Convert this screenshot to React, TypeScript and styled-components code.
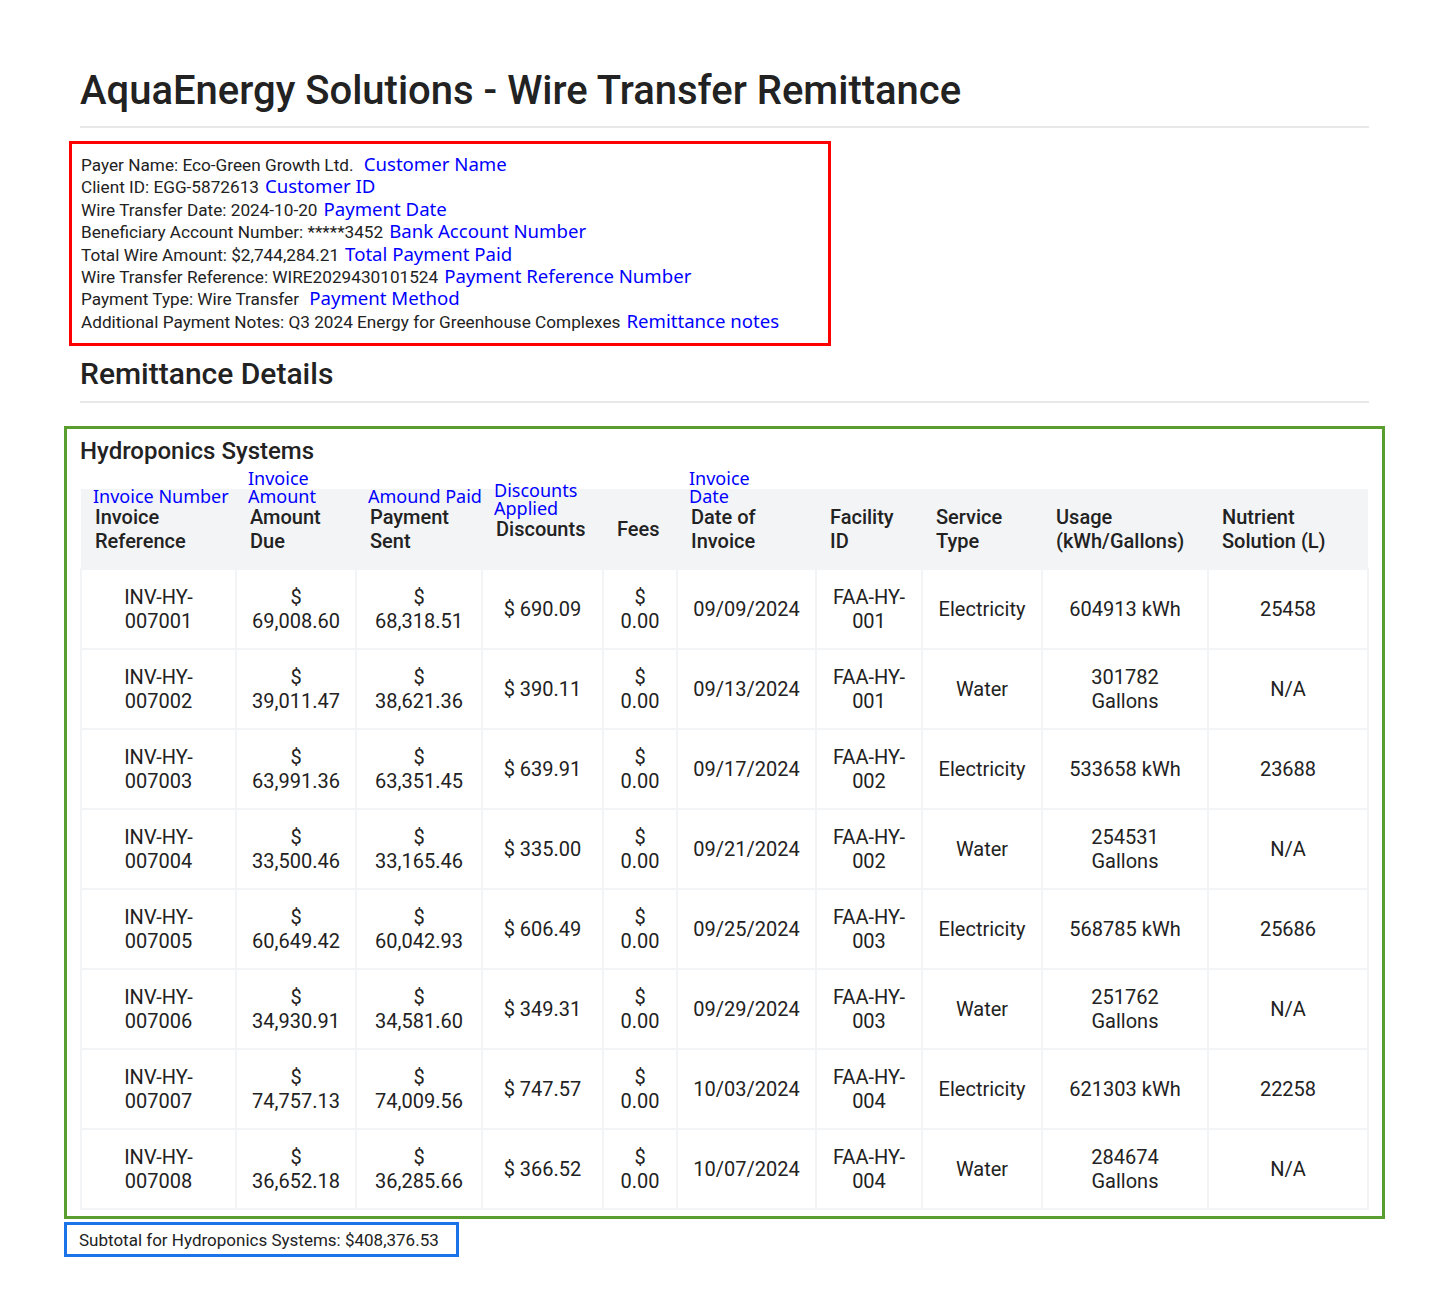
import React from "react";
import styled, { createGlobalStyle } from "styled-components";

const Global = createGlobalStyle`
  body { margin: 0; background: #fff; font-family: Roboto, "Liberation Sans", sans-serif; color: #222; }
`;

const Page = styled.div`
  padding: 67px 80px 40px 80px;
`;

const Title = styled.h1`
  margin: 0;
  font-size: 40px;
  font-weight: 500;
  color: #222;
  padding-bottom: 12px;
  border-bottom: 2px solid #e8e8e8;
`;

const PayerBox = styled.div`
  margin: 13px 0 0 -11px;
  width: 762px;
  box-sizing: border-box;
  border: 3px solid #f00;
  padding: 10px 9px 10px 9px;
  font-size: 17.2px;
  line-height: 22.4px;
`;

const Label = styled.span`
  color: #00f;
  font-family: "Noto Sans", "Open Sans", sans-serif;
  font-size: 18.6px;
  line-height: 1;
  margin-left: 6px;
`;

const SubTitle = styled.h2`
  margin: 10px 0 0;
  font-size: 30px;
  font-weight: 500;
  padding-bottom: 10px;
  border-bottom: 2px solid #e8e8e8;
`;

const Section = styled.div`
  margin: 23px -16px 0 -16px;
  border: 3px solid #5a9e2f;
  padding: 8px 15px 6px 13px;
`;

const SectionTitle = styled.h3`
  margin: 0 0 24px;
  font-size: 24px;
  font-weight: 500;
`;

const Table = styled.table`
  border-collapse: collapse;
  width: 100%;
  font-size: 20px;
  table-layout: fixed;
`;

const Th = styled.th`
  background: #f3f4f6;
  text-align: left;
  font-weight: 500;
  padding: 14px 14px;
  height: 80px;
  box-sizing: border-box;
  line-height: 24px;
  vertical-align: middle;
`;

const ThInner = styled.div`
  position: relative;
`;

const Tag = styled.span`
  position: absolute;
  left: -2px;
  bottom: 100%;
  color: #00f;
  font-weight: 400;
  font-family: "Noto Sans", "Open Sans", sans-serif;
  font-size: 18px;
  line-height: 18px;
  white-space: nowrap;
`;

const Td = styled.td`
  background: #fff;
  border: 2px solid #f3f4f6;
  text-align: center;
  padding: 10px 14px;
  height: 80px;
  box-sizing: border-box;
  line-height: 24px;
`;

const Subtotal = styled.div`
  display: inline-block;
  margin: 3px 0 0 -16px;
  border: 3px solid #1a73e8;
  padding: 5px 17px 4px 12px;
  font-size: 17px;
`;

const cols: [number, string, string][] = [
  [155, "Invoice Number", "Invoice Reference"],
  [120, "Invoice\nAmount", "Amount Due"],
  [126, "Amound Paid", "Payment Sent"],
  [121, "Discounts\nApplied", "Discounts"],
  [74, "", "Fees"],
  [139, "Invoice\nDate", "Date of Invoice"],
  [106, "", "Facility ID"],
  [120, "", "Service Type"],
  [166, "", "Usage (kWh/Gallons)"],
  [160, "", "Nutrient Solution (L)"],
];

const rows = [
  ["INV-HY-007001", "69,008.60", "68,318.51", "690.09", "09/09/2024", "FAA-HY-001", "Electricity", "604913 kWh", "25458"],
  ["INV-HY-007002", "39,011.47", "38,621.36", "390.11", "09/13/2024", "FAA-HY-001", "Water", "301782 Gallons", "N/A"],
  ["INV-HY-007003", "63,991.36", "63,351.45", "639.91", "09/17/2024", "FAA-HY-002", "Electricity", "533658 kWh", "23688"],
  ["INV-HY-007004", "33,500.46", "33,165.46", "335.00", "09/21/2024", "FAA-HY-002", "Water", "254531 Gallons", "N/A"],
  ["INV-HY-007005", "60,649.42", "60,042.93", "606.49", "09/25/2024", "FAA-HY-003", "Electricity", "568785 kWh", "25686"],
  ["INV-HY-007006", "34,930.91", "34,581.60", "349.31", "09/29/2024", "FAA-HY-003", "Water", "251762 Gallons", "N/A"],
  ["INV-HY-007007", "74,757.13", "74,009.56", "747.57", "10/03/2024", "FAA-HY-004", "Electricity", "621303 kWh", "22258"],
  ["INV-HY-007008", "36,652.18", "36,285.66", "366.52", "10/07/2024", "FAA-HY-004", "Water", "284674 Gallons", "N/A"],
];

const payer: [string, string][] = [
  ["Payer Name: Eco-Green Growth Ltd. ", "Customer Name"],
  ["Client ID: EGG-5872613", "Customer ID"],
  ["Wire Transfer Date: 2024-10-20", "Payment Date"],
  ["Beneficiary Account Number: *****3452", "Bank Account Number"],
  ["Total Wire Amount: $2,744,284.21", "Total Payment Paid"],
  ["Wire Transfer Reference: WIRE2029430101524", "Payment Reference Number"],
  ["Payment Type: Wire Transfer ", "Payment Method"],
  ["Additional Payment Notes: Q3 2024 Energy for Greenhouse Complexes", "Remittance notes"],
];

export default function App() {
  return (
    <Page>
      <Global />
      <Title>AquaEnergy Solutions - Wire Transfer Remittance</Title>
      <PayerBox>
        {payer.map(([t, l]) => (
          <div key={l}>
            {t}
            <Label>{l}</Label>
          </div>
        ))}
      </PayerBox>
      <SubTitle>Remittance Details</SubTitle>
      <Section>
        <SectionTitle>Hydroponics Systems</SectionTitle>
        <Table>
          <colgroup>
            {cols.map(([w], i) => (
              <col key={i} style={{ width: w }} />
            ))}
          </colgroup>
          <thead>
            <tr>
              {cols.map(([, tag, h], i) => (
                <Th key={i}>
                  <ThInner>
                    {tag && (
                      <Tag>
                        {tag.split("\n").map((s) => (
                          <div key={s}>{s}</div>
                        ))}
                      </Tag>
                    )}
                    {h}
                  </ThInner>
                </Th>
              ))}
            </tr>
          </thead>
          <tbody>
            {rows.map((r) => (
              <tr key={r[0]}>
                <Td>{r[0]}</Td>
                <Td>$ {r[1]}</Td>
                <Td>$ {r[2]}</Td>
                <Td>$ {r[3]}</Td>
                <Td>$ 0.00</Td>
                <Td>{r[4]}</Td>
                <Td>{r[5]}</Td>
                <Td>{r[6]}</Td>
                <Td>{r[7]}</Td>
                <Td>{r[8]}</Td>
              </tr>
            ))}
          </tbody>
        </Table>
      </Section>
      <Subtotal>Subtotal for Hydroponics Systems: $408,376.53</Subtotal>
    </Page>
  );
}
